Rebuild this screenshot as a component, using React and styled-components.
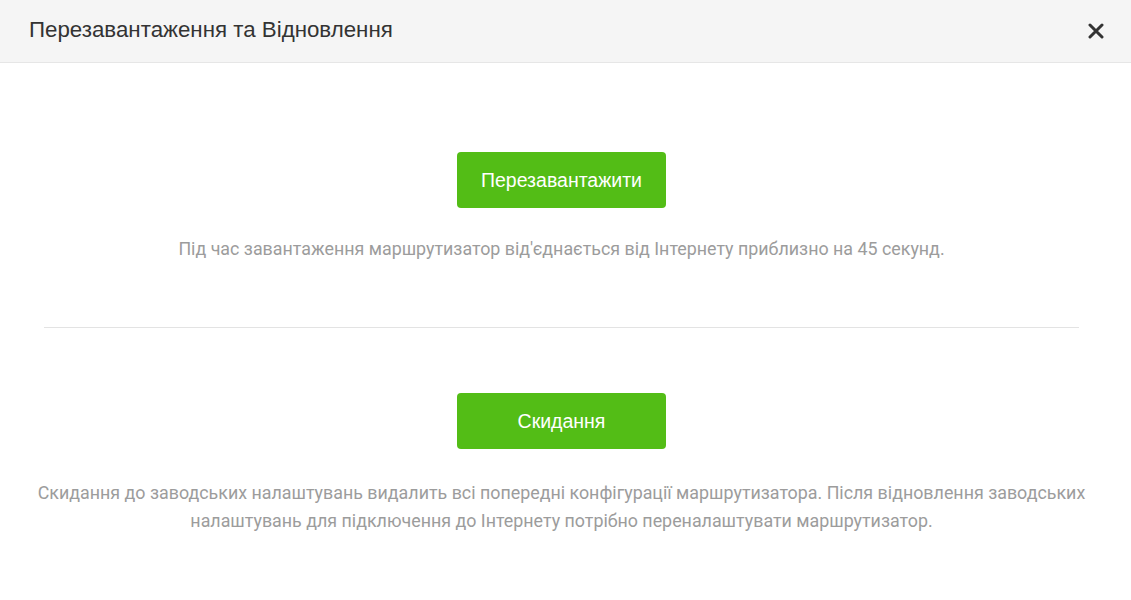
import React from 'react';
import styled, { createGlobalStyle } from 'styled-components';

const GlobalStyle = createGlobalStyle`
  html, body {
    margin: 0;
    padding: 0;
    background: #fff;
  }
`;

const Dialog = styled.div`
  width: 1131px;
  height: 600px;
  background: #fff;
  font-family: "Liberation Sans", Arial, sans-serif;
`;

const Header = styled.div`
  height: 63px;
  background: #f5f5f5;
  border-bottom: 1px solid #e6e6e6;
  display: flex;
  align-items: center;
  justify-content: space-between;
  padding: 0 24px 0 29px;
  box-sizing: border-box;
`;

const Title = styled.h2`
  margin: 0;
  font-size: 22.3px;
  font-weight: normal;
  color: #333;
  padding-bottom: 2px;
`;

const Close = styled.button`
  border: 0;
  background: none;
  padding: 0;
  width: 22px;
  height: 22px;
  display: flex;
  align-items: center;
  justify-content: center;
  cursor: pointer;
`;

const Body = styled.div`
  padding: 89px 8px 0 0;
  display: flex;
  flex-direction: column;
  align-items: center;
`;

const Section = styled.div`
  display: flex;
  flex-direction: column;
  align-items: center;
`;

const GreenButton = styled.button`
  width: 209px;
  height: 56px;
  border: 0;
  border-radius: 4px;
  background: #53bd16;
  color: #fff;
  font-family: "Liberation Sans", Arial, sans-serif;
  font-size: 19.5px;
  cursor: pointer;
`;

const Note = styled.p`
  margin: ${p => p.$top}px 0 0;
  font-family: Roboto, "Liberation Sans", sans-serif;
  font-size: 17.85px;
  line-height: 28px;
  color: #9c9c9c;
  text-align: center;
  max-width: 1060px;
`;

const Divider = styled.hr`
  align-self: stretch;
  margin: 64px 44px 65px;
  border: 0;
  border-top: 1px solid #e3e3e3;
`;

export default function App() {
  return (
    <>
      <GlobalStyle />
      <Dialog>
        <Header>
          <Title>Перезавантаження та Відновлення</Title>
          <Close aria-label="close">
            <svg width="16" height="16" viewBox="0 0 16 16">
              <path d="M2 2L14 14M14 2L2 14" stroke="#333" strokeWidth="3" strokeLinecap="round" />
            </svg>
          </Close>
        </Header>
        <Body>
          <Section>
            <GreenButton>Перезавантажити</GreenButton>
            <Note $top={27}>
              Під час завантаження маршрутизатор від'єднається від Інтернету приблизно на 45 секунд.
            </Note>
          </Section>
          <Divider />
          <Section>
            <GreenButton>Скидання</GreenButton>
            <Note $top={30}>
              Скидання до заводських налаштувань видалить всі попередні конфігурації маршрутизатора. Після відновлення заводських налаштувань для підключення до Інтернету потрібно переналаштувати маршрутизатор.
            </Note>
          </Section>
        </Body>
      </Dialog>
    </>
  );
}
